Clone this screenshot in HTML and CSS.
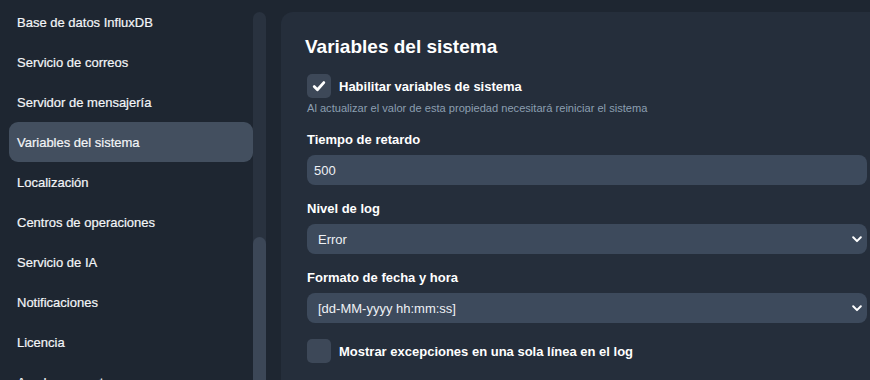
FILE: index.html
```html
<!DOCTYPE html>
<html lang="es">
<head>
<meta charset="utf-8">
<title>Variables del sistema</title>
<link rel="stylesheet" href="styles.css">
</head>
<body>
<div class="app">
  <aside class="sidebar">
    <nav class="nav">
      <a class="nav-item">Base de datos InfluxDB</a>
      <a class="nav-item">Servicio de correos</a>
      <a class="nav-item">Servidor de mensajería</a>
      <a class="nav-item active">Variables del sistema</a>
      <a class="nav-item">Localización</a>
      <a class="nav-item">Centros de operaciones</a>
      <a class="nav-item">Servicio de IA</a>
      <a class="nav-item">Notificaciones</a>
      <a class="nav-item">Licencia</a>
      <a class="nav-item">Ayuda y soporte</a>
    </nav>
    <div class="scrollbar"><div class="thumb"></div></div>
  </aside>
  <main class="panel">
    <h1 class="title">Variables del sistema</h1>
    <div class="check-row">
      <span class="box checked">
        <svg viewBox="0 0 24 24" width="24" height="24"><path d="M7.2 12.6l3.2 3.1 6.4-7.1" fill="none" stroke="#ffffff" stroke-width="2.8" stroke-linecap="round" stroke-linejoin="round"/></svg>
      </span>
      <span class="check-label">Habilitar variables de sistema</span>
    </div>
    <p class="help">Al actualizar el valor de esta propiedad necesitará reiniciar el sistema</p>

    <div class="field">
      <label class="label">Tiempo de retardo</label>
      <div class="input">500</div>
    </div>
    <div class="field">
      <label class="label">Nivel de log</label>
      <div class="input select"><span>Error</span>
        <svg class="chev" viewBox="0 0 10 7" width="10" height="7"><path d="M1.2 1.3l3.8 3.8 3.8-3.8" fill="none" stroke="#ffffff" stroke-width="2" stroke-linecap="round" stroke-linejoin="round"/></svg>
      </div>
    </div>
    <div class="field">
      <label class="label">Formato de fecha y hora</label>
      <div class="input select"><span>[dd-MM-yyyy hh:mm:ss]</span>
        <svg class="chev" viewBox="0 0 10 7" width="10" height="7"><path d="M1.2 1.3l3.8 3.8 3.8-3.8" fill="none" stroke="#ffffff" stroke-width="2" stroke-linecap="round" stroke-linejoin="round"/></svg>
      </div>
    </div>
    <div class="check-row last">
      <span class="box"></span>
      <span class="check-label">Mostrar excepciones en una sola línea en el log</span>
    </div>
  </main>
</div>
</body>
</html>
```

FILE: styles.css
```css
html, body {
  margin: 0;
  padding: 0;
  height: 100%;
  overflow: hidden;
  background: #1e2631;
  font-family: "Liberation Sans", Arial, sans-serif;
  color: #f3f5f8;
}

.app {
  display: flex;
  height: 380px;
  width: 900px;
}

.sidebar {
  display: flex;
  width: 281px;
  flex: none;
}

.nav {
  display: flex;
  flex-direction: column;
  padding: 2px 0 0 9px;
  width: 244px;
}

.nav-item {
  display: flex;
  align-items: center;
  height: 40px;
  flex: none;
  padding-left: 8px;
  border-radius: 9px;
  font-size: 13px;
  color: #f3f5f8;
  -webkit-text-stroke: 0.2px #f3f5f8;
}

.nav-item.active {
  background: #434f5f;
}

.scrollbar {
  margin-top: 12px;
  width: 13px;
  background: #29323f;
  border-radius: 7px 7px 0 0;
  display: flex;
  flex-direction: column;
  padding-top: 225px;
}

.thumb {
  flex: 1;
  background: #3c4757;
  border-radius: 7px 7px 0 0;
}

.panel {
  margin-top: 12px;
  width: 612px;
  background: #252e3b;
  border-radius: 12px 0 0 0;
  padding: 22px 0 0 26px;
  box-sizing: border-box;
}

.title {
  margin: 0 0 0 -2px;
  font-size: 19px;
  font-weight: bold;
  line-height: 26px;
  color: #ffffff;
}

.check-row {
  display: flex;
  align-items: center;
  gap: 8px;
  margin-top: 14px;
}

.check-row.last {
  margin-top: 16px;
}

.box {
  width: 24px;
  height: 24px;
  border-radius: 5px;
  background: #3d4858;
  display: flex;
  flex: none;
}

.check-label {
  font-size: 13px;
  font-weight: bold;
  color: #ffffff;
}

.help {
  margin: 3px 0 0 0;
  font-size: 11.1px;
  line-height: 14px;
  color: #8c9fb1;
}

.field {
  margin-top: 17px;
}

.field + .field {
  margin-top: 16px;
}

.label {
  display: block;
  font-size: 13px;
  font-weight: bold;
  line-height: 16px;
  color: #ffffff;
  margin-bottom: 7px;
}

.input {
  width: 560px;
  height: 30px;
  box-sizing: border-box;
  border-radius: 8px;
  background: #3d4a5c;
  display: flex;
  align-items: center;
  padding: 0 7px;
  font-size: 13px;
  color: #eef1f5;
}

.input.select {
  justify-content: space-between;
  padding: 0 5px 0 11px;
}

.chev {
  flex: none;
}
```
